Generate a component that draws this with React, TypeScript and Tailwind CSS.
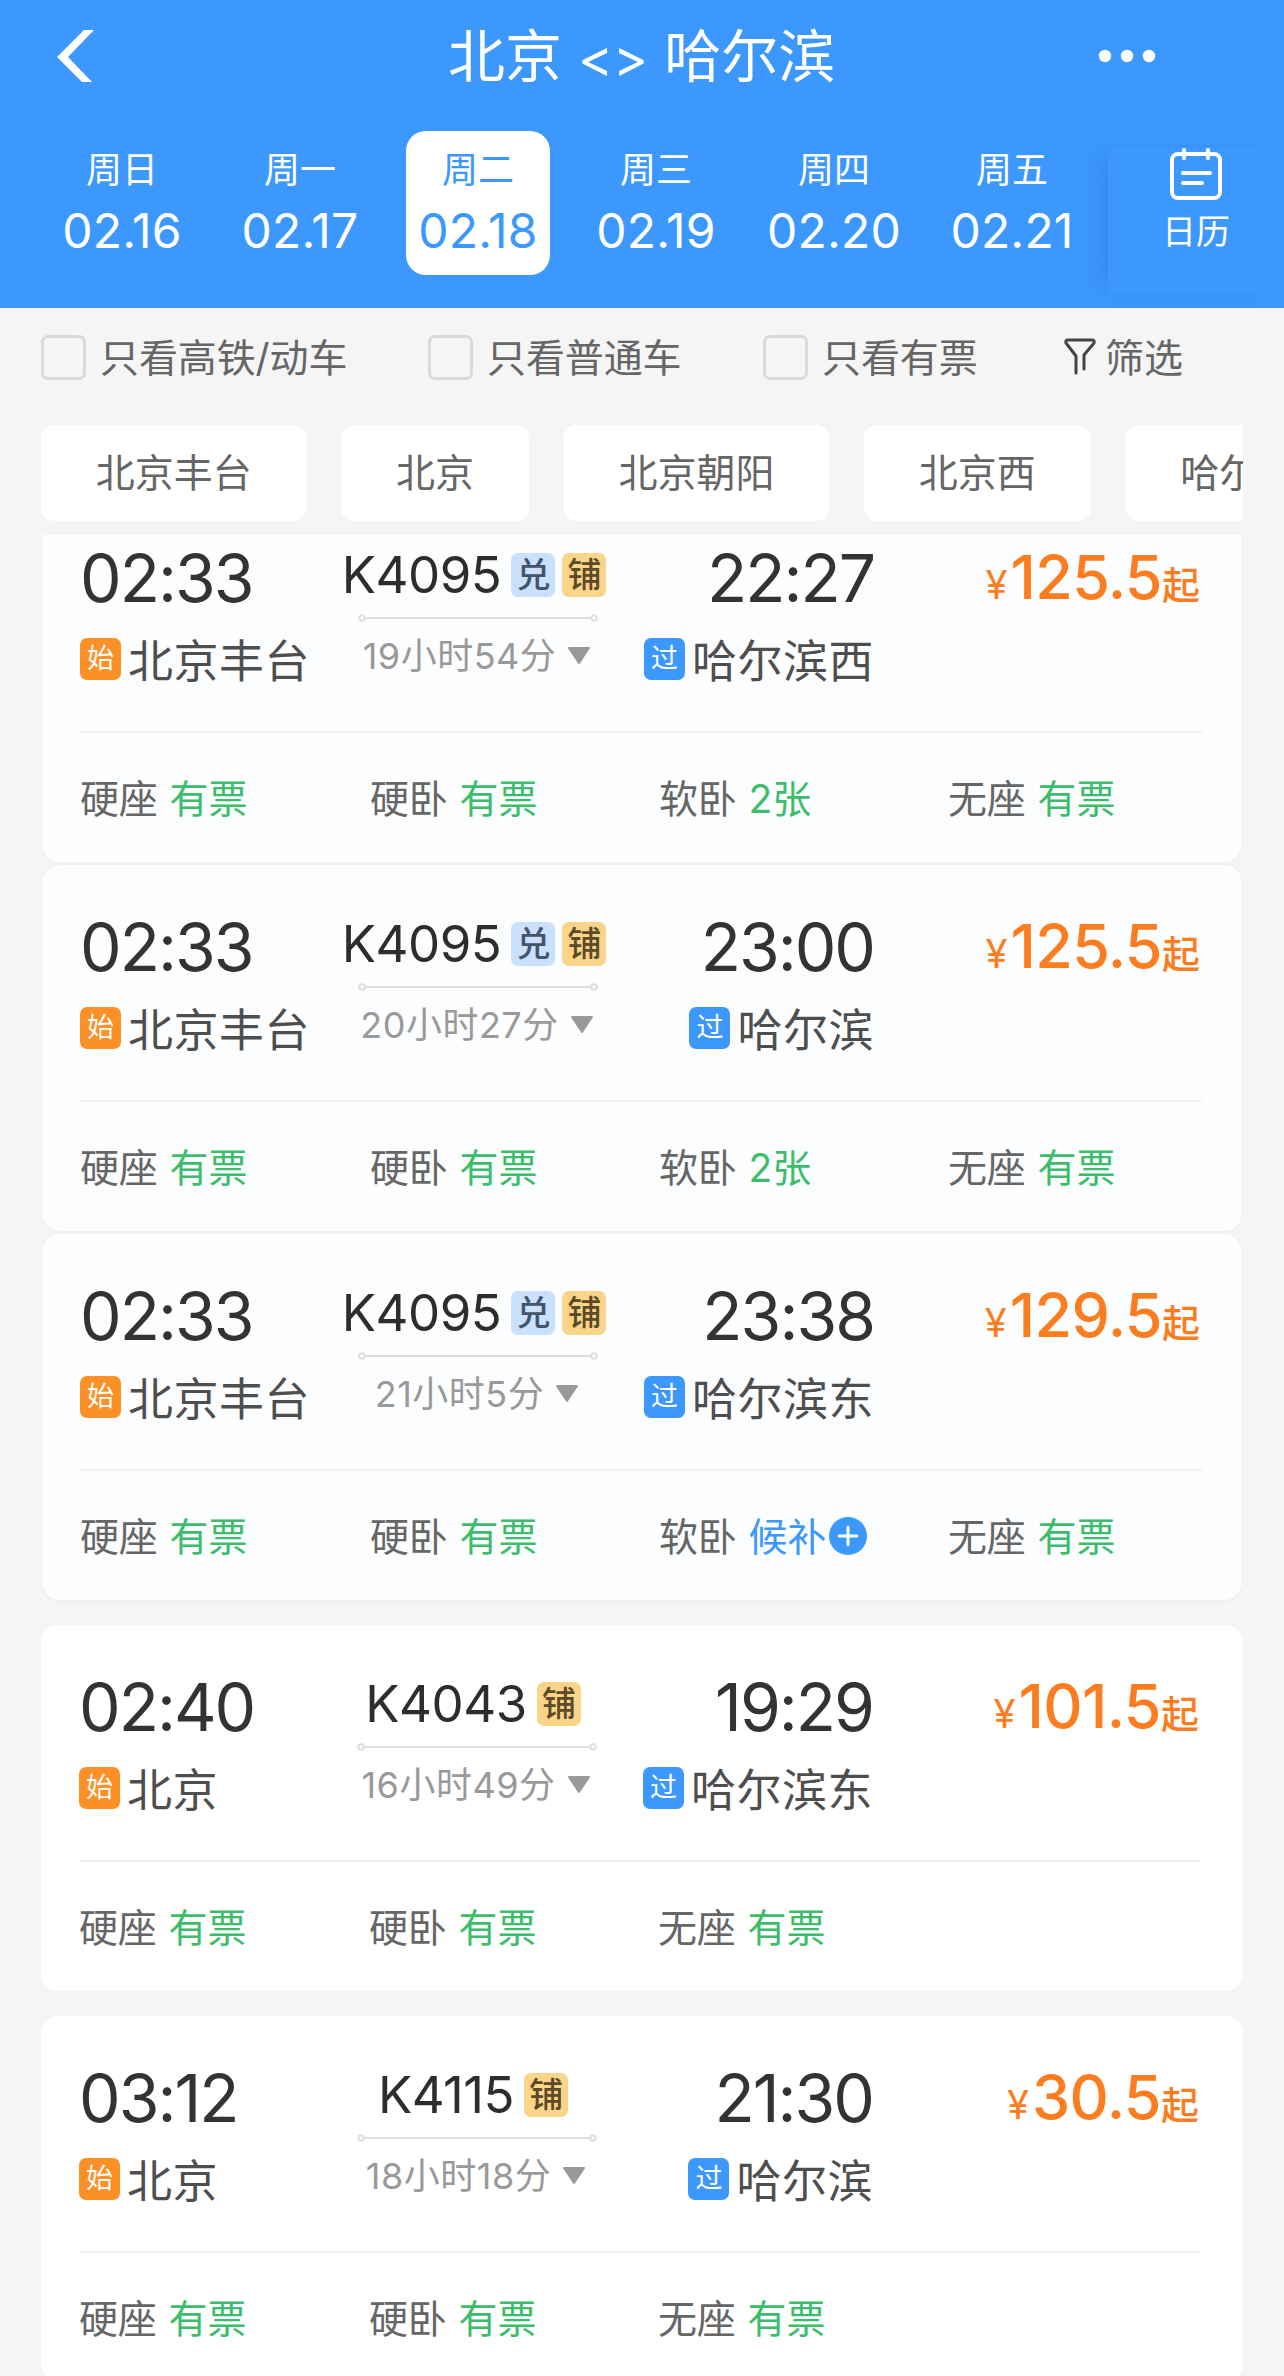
const days = [
  { week: "周日", date: "02.16" },
  { week: "周一", date: "02.17" },
  { week: "周二", date: "02.18" },
  { week: "周三", date: "02.19" },
  { week: "周四", date: "02.20" },
  { week: "周五", date: "02.21" },
];

const stations = ["北京丰台", "北京", "北京朝阳", "北京西", "哈尔滨"];

type Train = {
  depart: string;
  from: string;
  no: string;
  exchange?: boolean;
  duration: string;
  arrive: string;
  to: string;
  price: string;
  seats: string[][];
};

const groups: Train[][] = [
  [
    {
      depart: "02:33", from: "北京丰台", no: "K4095", exchange: true, duration: "19小时54分",
      arrive: "22:27", to: "哈尔滨西", price: "125.5",
      seats: [["硬座", "有票"], ["硬卧", "有票"], ["软卧", "2张"], ["无座", "有票"]],
    },
    {
      depart: "02:33", from: "北京丰台", no: "K4095", exchange: true, duration: "20小时27分",
      arrive: "23:00", to: "哈尔滨", price: "125.5",
      seats: [["硬座", "有票"], ["硬卧", "有票"], ["软卧", "2张"], ["无座", "有票"]],
    },
    {
      depart: "02:33", from: "北京丰台", no: "K4095", exchange: true, duration: "21小时5分",
      arrive: "23:38", to: "哈尔滨东", price: "129.5",
      seats: [["硬座", "有票"], ["硬卧", "有票"], ["软卧", "候补"], ["无座", "有票"]],
    },
  ],
  [
    {
      depart: "02:40", from: "北京", no: "K4043", duration: "16小时49分",
      arrive: "19:29", to: "哈尔滨东", price: "101.5",
      seats: [["硬座", "有票"], ["硬卧", "有票"], ["无座", "有票"]],
    },
  ],
  [
    {
      depart: "03:12", from: "北京", no: "K4115", duration: "18小时18分",
      arrive: "21:30", to: "哈尔滨", price: "30.5",
      seats: [["硬座", "有票"], ["硬卧", "有票"], ["无座", "有票"]],
    },
  ],
];

function Check({ label, className }: { label: string; className: string }) {
  return (
    <div className={"flex items-center shrink-0 " + className}>
      <span className="w-[45px] h-[45px] rounded-[7px] border-[3px] border-[#dadada]" />
      <span className="ml-[14px] text-[39px] tracking-[-0.1px] leading-none whitespace-nowrap">{label}</span>
    </div>
  );
}

function Station({ tag, name, color }: { tag: string; name: string; color: string }) {
  return (
    <div className="flex items-center h-[50px] mt-[28px]">
      <span className={"w-[41px] h-[42px] rounded-[7px] text-white text-[27px] leading-[42px] text-center " + color}>{tag}</span>
      <span className="ml-[7px] pt-[6px] text-[45px] tracking-[0.5px] leading-[50px] text-[#4e4e4e] whitespace-nowrap">{name}</span>
    </div>
  );
}

function TrainCard({ train, grouped }: { train: Train; grouped: boolean }) {
  return (
    <div className={"h-[366px] shrink-0 rounded-[18px] " + (grouped ? "bg-[#fcfdff] outline-2 outline-[#f0f1f2] mx-px pl-[38px] pr-[40px]" : "bg-white pl-[38px] pr-[42px]")}>
      <div className="flex h-[235px] pt-[54px]">
        <div className="w-[264px]">
          <div className="text-[66px] leading-[56px] tracking-[-2px] text-[#333]">{train.depart}</div>
          <Station tag="始" name={train.from} color="bg-[#fb9126]" />
        </div>
        <div className="w-[264px] flex flex-col items-center">
          <div className="mr-[4px] flex items-center h-[50px] text-[51px] leading-[50px] tracking-[-0.5px] text-[#2d2d2d]">
            {train.no}
            {train.exchange && (
              <span className="ml-[10px] w-[44px] h-[44px] rounded-[7px] bg-[#c9e0fe] text-[34px] leading-[44px] text-center text-[#44546a] font-medium">兑</span>
            )}
            <span className={"w-[44px] h-[44px] rounded-[7px] bg-[#fad488] text-[34px] leading-[44px] text-center text-[#5c4a28] font-medium " + (train.exchange ? "ml-[7px]" : "ml-[10px]")}>铺</span>
          </div>
          <svg className="mt-[14px] ml-[4px]" width="240" height="8" viewBox="0 0 240 8" fill="none" stroke="#dddee0" strokeWidth="2">
            <path d="M7 4H233" />
            <circle cx="4" cy="4" r="2.7" />
            <circle cx="236" cy="4" r="2.7" />
          </svg>
          <div className="ml-[2px] flex items-center mt-[14px] h-[40px] text-[36px] tracking-[0.5px] leading-[40px] text-[#999] whitespace-nowrap">
            {train.duration}
            <svg className="ml-[11px]" width="24" height="18" viewBox="0 0 24 18">
              <path d="M2 1H22L12 16Z" fill="#999" stroke="#999" strokeWidth="2" strokeLinejoin="round" />
            </svg>
          </div>
        </div>
        <div className="w-[266px] flex flex-col items-end">
          <div className="text-[66px] leading-[56px] tracking-[-2px] text-[#333]">{train.arrive}</div>
          <Station tag="过" name={train.to} color="bg-[#3c98fc]" />
        </div>
        <div className="flex-1 flex items-baseline justify-end h-[56px] pr-[2px] text-[#fb7d1f]">
          <span className="mr-[3px] text-[40px] leading-none">¥</span>
          <span className="text-[61px] leading-[54px] tracking-[-0.6px] font-medium">{train.price}</span>
          <span className="text-[38px] leading-none font-medium">起</span>
        </div>
      </div>
      <div className="h-[2px] bg-[#eef0f1]" />
      <div className="grid grid-cols-[290px_289px_289px_1fr] h-[129px] pt-px items-center text-[39px] tracking-[-0.2px] leading-none">
        {train.seats.map(([seat, left]) => (
          <div key={seat} className="flex items-center whitespace-nowrap text-[#666]">
            {seat}
            <span className={"ml-[12px] " + (left === "候补" ? "text-[#3c98fc]" : "text-[#3dbd6b]")}>{left}</span>
            {left === "候补" && (
              <svg className="ml-[3px]" width="38" height="38" viewBox="0 0 38 38">
                <circle cx="19" cy="19" r="19" fill="#3c98fc" />
                <path d="M19 9V29M9 19H29" stroke="#fff" strokeWidth="3" />
              </svg>
            )}
          </div>
        ))}
      </div>
    </div>
  );
}

export default function App() {
  return (
    <div className="w-[1284px] h-[2376px] overflow-hidden flex flex-col bg-[#f5f5f5] text-[#666] font-[Inter,'Noto_Sans_CJK_SC',sans-serif]">
      <header className="h-[308px] shrink-0 bg-[#3c98fc] text-white">
        <div className="h-[131px] pl-[57px] pr-[128px] pb-[20px] flex items-center">
          <svg width="38" height="52" viewBox="0 0 38 52" fill="#fff">
            <path d="M27 0H37L11 27L35 52H25L0 27Z" />
          </svg>
          <h1 className="flex-1 ml-[353px] pt-[2px] text-[57px] leading-none whitespace-nowrap">
            北京 <span className="text-[53px]">&lt;&gt;</span> 哈尔滨
          </h1>
          <svg width="58" height="14" viewBox="0 0 58 14" fill="#fff">
            <circle cx="7" cy="7" r="6.2" />
            <circle cx="29" cy="7" r="6.2" />
            <circle cx="51" cy="7" r="6.2" />
          </svg>
        </div>
        <div className="flex pl-[33px]">
          <div className="flex w-[1075px]">
            {days.map((day) => (
              <div key={day.date} className="w-[178px] shrink-0 flex justify-center">
                <div className={"w-[144px] h-[144px] rounded-[20px] flex flex-col items-center pt-[19px] " + (day.date === "02.18" ? "bg-white text-[#3c98fc]" : "")}>
                  <span className="text-[36px] leading-[40px]">{day.week}</span>
                  <span className="mt-[15px] text-[48px] leading-[52px] tracking-[0.2px]">{day.date}</span>
                </div>
              </div>
            ))}
          </div>
          <div className="mt-[17px] w-[176px] h-[146px] bg-[#3c98fc] shadow-[-14px_0_20px_-8px_rgba(20,70,140,0.18)] flex flex-col items-center">
            <svg width="54" height="54" viewBox="0 0 54 54" fill="none" stroke="#fff" strokeWidth="4" strokeLinecap="round">
              <rect x="3" y="6" width="48" height="44" rx="6" />
              <path d="M15 2V10M39 2V10M14 25H41M14 35H33" />
            </svg>
            <span className="mt-[11px] text-[34px] leading-[38px]">日历</span>
          </div>
        </div>
      </header>

      <div className="flex items-center h-[98px] shrink-0 pl-[41px]">
        <Check label="只看高铁/动车" className="w-[387px]" />
        <Check label="只看普通车" className="w-[335px]" />
        <Check label="只看有票" className="w-[300px]" />
        <svg width="34" height="38" viewBox="0 0 34 38" fill="none" stroke="#444" strokeWidth="3" strokeLinecap="round" strokeLinejoin="round">
          <path d="M13 35V18L3 5Q2 2 5 2H29Q32 2 31 5L21 17V31" />
        </svg>
        <span className="ml-[8px] text-[39px] leading-none">筛选</span>
      </div>

      <div className="flex gap-[35px] mt-[19px] mx-[41px] h-[96px] shrink-0 overflow-hidden">
        {stations.map((s) => (
          <div key={s} className="shrink-0 px-[54.7px] rounded-[13px] bg-white text-[39px] leading-[95px]">
            {s}
          </div>
        ))}
      </div>

      {/* scrolled list, first card is cut by the bar above */}
      <div className="mt-[14px] mx-[41px] flex-1 overflow-hidden">
        <div className="-mt-[39px] flex flex-col gap-[25px]">
          {groups.map((group, i) => (
            <div key={i} className="flex flex-col gap-[3px]">
              {group.map((train) => (
                <TrainCard key={train.arrive} train={train} grouped={group.length > 1} />
              ))}
            </div>
          ))}
        </div>
      </div>
    </div>
  );
}
